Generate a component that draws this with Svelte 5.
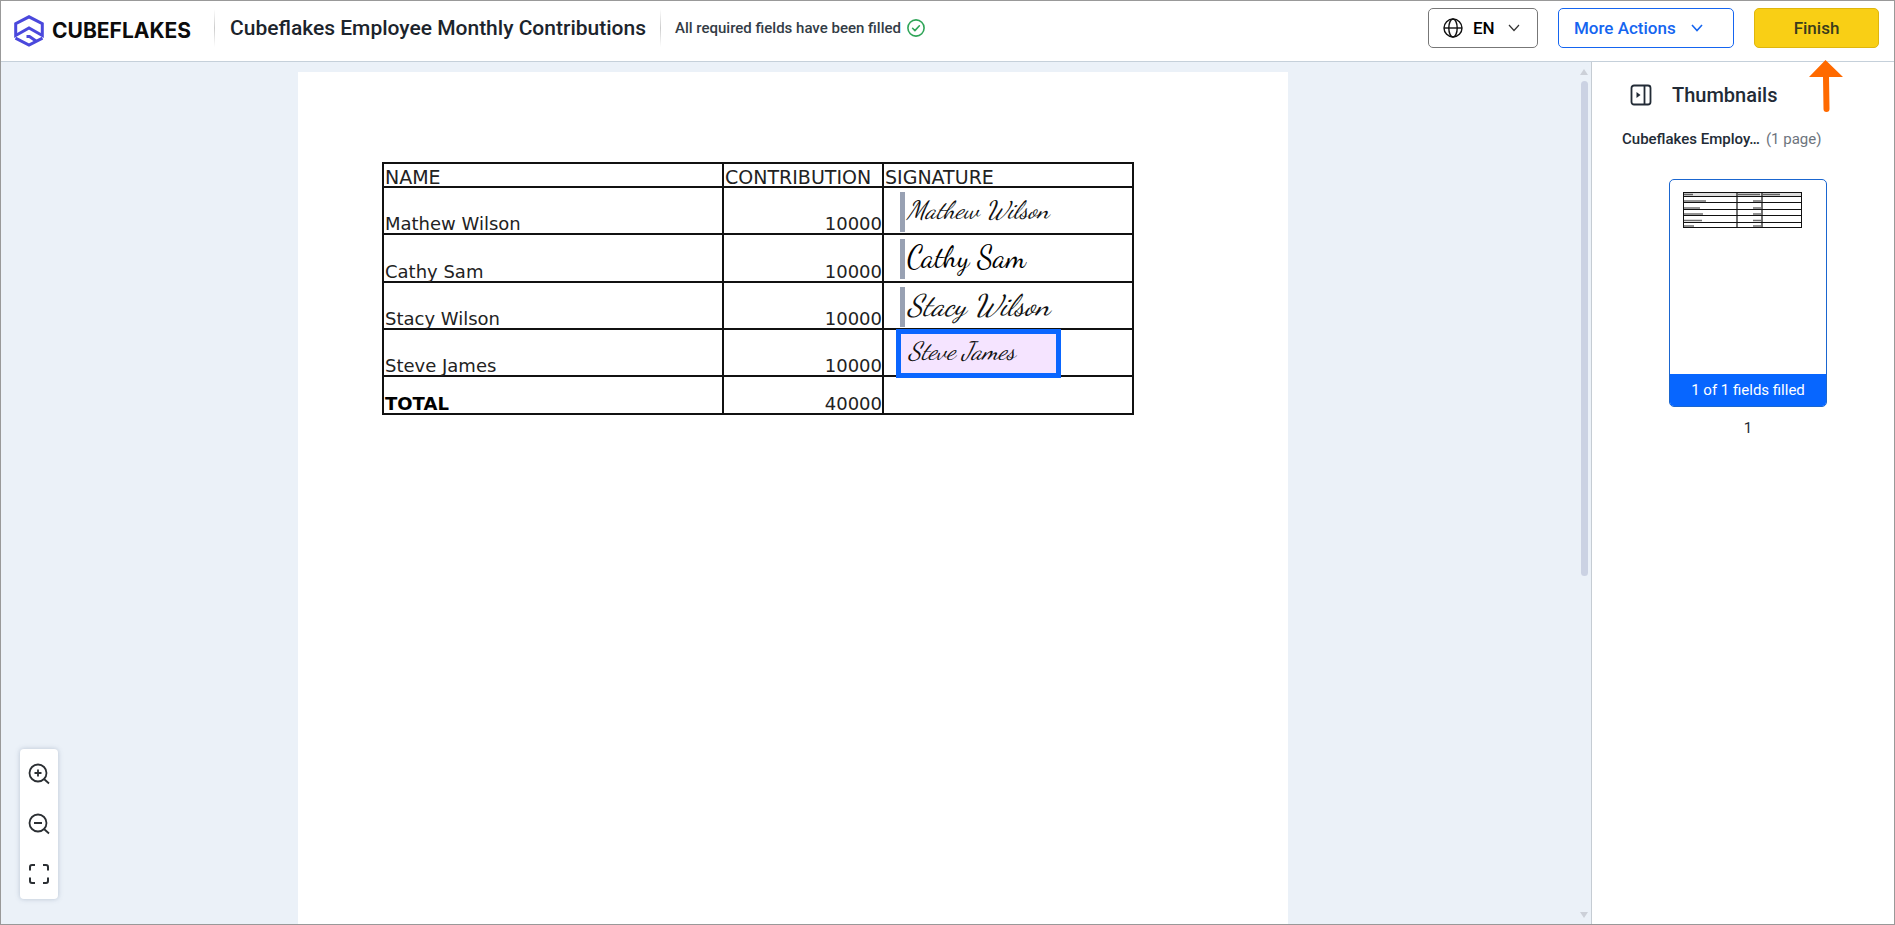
<script lang="ts">
	const docName = "Cubeflakes Employee Monthly Contributions";
	const fileLabel = "Cubeflakes Employ…";

	let rows = [
		{ name: "Mathew Wilson", amount: 10000, style: "thin" },
		{ name: "Cathy Sam", amount: 10000, style: "bold" },
		{ name: "Stacy Wilson", amount: 10000, style: "wide" },
		{ name: "Steve James", amount: 10000, style: "thin" }
	];
	let active = $state(3);
	let total = rows.reduce((sum, r) => sum + r.amount, 0);
</script>

<div class="app">
	<header class="topbar">
		<div class="brand">
			<svg width="30" height="32" viewBox="0 0 30 32" fill="none" stroke="#4a48dc" stroke-width="3">
				<path d="M1.700 20.500V8.600L15 1.800l13.300 6.800V20.500L15 13 1.700 20.500z" />
				<path d="M1.500 23.200L15 30l13.500-6.800" />
				<path d="M12.500 21.500h3l6.500 4.500" />
			</svg>
			<span class="brand-name">CUBEFLAKES</span>
		</div>
		<span class="divider"></span>
		<h1>{docName}</h1>
		<span class="divider"></span>
		<p class="status">
			All required fields have been filled
			<svg width="18" height="18" viewBox="0 0 18 18" fill="none" stroke="#2fa558" stroke-width="1.600" stroke-linecap="round" stroke-linejoin="round">
				<circle cx="9" cy="9" r="8.100" />
				<path d="M5.600 9.300l2.300 2.300 4.500-4.800" />
			</svg>
		</p>

		<div class="actions">
			<button class="btn lang">
				<svg width="20" height="20" viewBox="0 0 20 20" fill="none" stroke="#111" stroke-width="1.400">
					<circle cx="10" cy="10" r="9" />
					<ellipse cx="10" cy="10" rx="4.200" ry="9" />
					<path d="M1 10h18" />
				</svg>
				EN
				<svg class="chev" width="12" height="8" viewBox="0 0 12 8" fill="none" stroke="#333" stroke-width="1.200"><path d="M1 1l5 5.500L11 1" /></svg>
			</button>
			<button class="btn more">
				More Actions
				<svg width="12" height="8" viewBox="0 0 12 8" fill="none" stroke="#1565f0" stroke-width="1.600"><path d="M1 1l5 5.500L11 1" /></svg>
			</button>
			<div class="finish-wrap">
				<button class="btn finish">Finish</button>
				<svg class="pointer" width="34" height="52" viewBox="0 0 34 52">
					<path d="M16.500 0L34 17H20l.5 32a3 3 0 0 1-6 0L14 17H0z" fill="#ff6a00" />
				</svg>
			</div>
		</div>
	</header>

	<div class="body">
		<main class="viewer">
			<div class="stage">
				<div class="page">
					<table>
						<thead>
							<tr>
								<th class="c-name">NAME</th>
								<th class="c-amount">CONTRIBUTION</th>
								<th>SIGNATURE</th>
							</tr>
						</thead>
						<tbody>
							{#each rows as row, i}
								<tr>
									<td>{row.name}</td>
									<td class="num">{row.amount}</td>
									<td class="sign-cell">
										<button class="sign {row.style}" class:active={active === i} onclick={() => (active = i)}>
											{row.name}
										</button>
									</td>
								</tr>
							{/each}
							<tr class="total">
								<td><b>TOTAL</b></td>
								<td class="num">{total}</td>
								<td></td>
							</tr>
						</tbody>
					</table>
				</div>
			</div>

			<div class="scroll">
				<svg width="8" height="6" viewBox="0 0 8 6"><path d="M4 0l4 6H0z" fill="#ccd0d8" /></svg>
				<div class="track"><div class="thumb"></div></div>
				<svg width="8" height="6" viewBox="0 0 8 6"><path d="M0 0h8L4 6z" fill="#ccd0d8" /></svg>
			</div>

			<div class="zoom">
				<button aria-label="Zoom in">
					<svg width="22" height="22" viewBox="0 0 22 22" fill="none" stroke="#2b2f33" stroke-width="1.800">
						<circle cx="10" cy="10" r="8.500" />
						<path d="M16 16l5 4.500M6.500 10h7M10 6.500v7" />
					</svg>
				</button>
				<button aria-label="Zoom out">
					<svg width="22" height="22" viewBox="0 0 22 22" fill="none" stroke="#2b2f33" stroke-width="1.800">
						<circle cx="10" cy="10" r="8.500" />
						<path d="M16 16l5 4.500M6 10h8" />
					</svg>
				</button>
				<button aria-label="Fit to screen">
					<svg width="22" height="22" viewBox="0 0 22 22" fill="none" stroke="#2b2f33" stroke-width="2">
						<path d="M2 7.500V4a2 2 0 0 1 2-2h3M15 2h3a2 2 0 0 1 2 2v3.500M20 14.500V18a2 2 0 0 1-2 2h-3M7 20H4a2 2 0 0 1-2-2v-3.500" />
					</svg>
				</button>
			</div>
		</main>

		<aside>
			<div class="side-head">
				<button aria-label="Collapse thumbnails">
					<svg width="22" height="22" viewBox="0 0 22 22" fill="none" stroke="#222b36" stroke-width="1.800">
						<rect x="1.500" y="1.500" width="19" height="19" rx="2.500" />
						<path d="M14.500 1.500v19" />
						<path d="M6.500 8v6l4-3z" fill="#222b36" stroke="none" />
					</svg>
				</button>
				<h2>Thumbnails</h2>
			</div>
			<p class="file"><b>{fileLabel}</b><span>(1 page)</span></p>

			<button class="card">
				<span class="preview">
					<svg width="119" height="36" viewBox="0 0 119 36" fill="none" stroke="#111">
						<rect x="1" y="1" width="117" height="3" fill="#ddd" stroke="none" />
						<rect x="0.500" y="0.500" width="118" height="35" />
						<path d="M0 4.500h119M0 10.500h119M0 17.500h119M0 23.500h119M0 30.500h119M54 0v36M79 0v36" stroke-width="1.200" />
						<path d="M1 2.500h9M55 2.500h22M80 2.500h17M1 9h22M1 16h16M1 22h19M1 28.500h18M1 34h10M70 9h8M70 16h8M70 22h8M70 28.500h8M70 34h8" stroke-width="1.500" opacity="0.600" />
					</svg>
				</span>
				<span class="filled">1 of 1 fields filled</span>
			</button>
			<p class="page-no">1</p>
		</aside>
	</div>
</div>

<style>
	:global(body) {
		overflow: hidden;
	}

	.app {
		box-sizing: border-box;
		height: 100vh;
		display: flex;
		flex-direction: column;
		border: 1px solid #999;
		background: #fff;
		color: #222b36;
		font-family: Roboto, "Liberation Sans", sans-serif;
	}

	h1, h2, p {
		margin: 0;
	}

	button {
		padding: 0;
		border: none;
		background: none;
		font-family: inherit;
		color: inherit;
		cursor: pointer;
	}

	svg {
		display: block;
		flex: none;
	}

	.topbar {
		box-sizing: border-box;
		height: 61px;
		flex: none;
		display: flex;
		align-items: center;
		padding: 0 15px 6px 13px;
		border-bottom: 1px solid #c5d0da;
	}

	.brand {
		display: flex;
		align-items: center;
		gap: 8px;
		padding-top: 6px;
		width: 200px;
	}

	.brand-name {
		font: 700 21px/24px Inter, sans-serif;
		color: #0c0c0c;
	}

	.divider {
		width: 1px;
		height: 38px;
		background: linear-gradient(#fff, #ccc, #fff);
	}

	h1 {
		margin: 0 14px 0 15px;
		font-size: 21px;
		line-height: 28px;
		font-weight: 500;
		color: #1c242c;
	}

	.status {
		display: flex;
		align-items: center;
		gap: 6px;
		margin-left: 14px;
		font-size: 15px;
		line-height: 20px;
		font-weight: 500;
		color: #333c46;
	}

	.actions {
		display: flex;
		gap: 20px;
		margin-left: auto;
	}

	.btn {
		box-sizing: border-box;
		height: 40px;
		display: flex;
		align-items: center;
		border-radius: 5px;
		font-size: 17px;
		font-weight: 500;
	}

	.lang {
		width: 110px;
		gap: 10px;
		padding: 0 17px 0 14px;
		border: 1px solid #777;
		color: #000;
	}

	.chev {
		margin-left: auto;
	}

	.more {
		width: 176px;
		gap: 15px;
		padding: 0 15px;
		border: 1px solid #1565f0;
		color: #1565f0;
	}

	.finish-wrap {
		position: relative;
	}

	.finish {
		width: 125px;
		justify-content: center;
		background: #f9cf15;
		border: 1px solid #dfb60d;
		color: #3a3c1c;
	}

	.pointer {
		position: absolute;
		z-index: 2;
		top: 52px;
		right: 36px;
	}

	.body {
		flex: 1;
		min-height: 0;
		display: flex;
	}

	.viewer {
		position: relative;
		flex: 1;
		min-width: 0;
		display: flex;
		background: #ebf1f8;
	}

	.stage {
		flex: 1;
		display: flex;
		justify-content: center;
		padding: 10px 0 0 6px;
		overflow: hidden;
	}

	.page {
		box-sizing: border-box;
		width: 990px;
		padding: 90px 84px 0;
		background: #fff;
	}

	table {
		width: 752px;
		height: 253px;
		table-layout: fixed;
		border-collapse: collapse;
		font: 18px/18px "DejaVu Sans", Verdana, sans-serif;
		color: #222;
	}

	th, td {
		padding: 0 1px;
		border: 2px solid #111;
		text-align: left;
		vertical-align: bottom;
		font-weight: 400;
	}

	th {
		font-size: 19px;
	}

	thead tr {
		height: 24px;
	}

	.total {
		height: 38px;
	}

	.c-name {
		width: 336px;
	}

	.c-amount {
		width: 156px;
	}

	.num {
		padding: 0;
		text-align: right;
	}

	b {
		color: #000;
	}

	.sign-cell {
		position: relative;
	}

	/* fields float over the printed document */
	.sign {
		position: absolute;
		top: 4px;
		left: 16px;
		box-sizing: border-box;
		height: 40px;
		border-left: 5px solid #98a1b3;
		padding: 0 0 4px 2px;
		font: italic 25px/30px "Dancing Script", "Liberation Serif", cursive;
		color: #111;
		white-space: nowrap;
	}

	.sign.bold {
		font-size: 30px;
		font-style: normal;
		color: #000;
	}

	.sign.wide {
		font-size: 30px;
	}

	.sign.active {
		top: -1px;
		left: 12px;
		width: 165px;
		height: 49px;
		border: 5px solid #0a66ff;
		padding: 0 0 5px 7px;
		background: #f5e4ff;
		text-align: left;
	}

	.scroll {
		width: 12px;
		display: flex;
		flex-direction: column;
		align-items: center;
		gap: 6px;
		padding: 7px 2px 6px 0;
		box-sizing: border-box;
	}

	.track {
		flex: 1;
	}

	.thumb {
		width: 7px;
		height: 60%;
		border-radius: 4px;
		background: #cbd2e3;
	}

	.zoom {
		position: absolute;
		left: 19px;
		bottom: 25px;
		display: flex;
		flex-direction: column;
		padding: 0 8px;
		border-radius: 4px;
		background: #fff;
		box-shadow: 0 0 5px rgba(90, 110, 140, 0.35);
	}

	.zoom button {
		height: 50px;
	}

	aside {
		box-sizing: border-box;
		width: 303px;
		border-left: 1px solid #c5ccd3;
		padding: 19px 30px 0 30px;
	}

	.side-head {
		display: flex;
		align-items: center;
		gap: 20px;
		padding-left: 8px;
	}

	h2 {
		font-size: 20px;
		line-height: 28px;
		font-weight: 500;
	}

	.file {
		display: flex;
		gap: 6px;
		margin-top: 20px;
		font-size: 15px;
		line-height: 20px;
		color: #6d747d;
	}

	.file b {
		font-weight: 500;
		color: #222b36;
	}

	.card {
		box-sizing: border-box;
		width: 158px;
		height: 228px;
		display: flex;
		flex-direction: column;
		margin: 30px 0 0 47px;
		border: 1px solid #1a66d0;
		border-radius: 5px;
		overflow: hidden;
	}

	.preview {
		flex: 1;
		padding: 12px 13px;
	}

	.filled {
		align-self: stretch;
		background: #0766ff;
		color: #fff;
		font-size: 15px;
		line-height: 32px;
	}

	.page-no {
		width: 158px;
		margin: 11px 0 0 47px;
		text-align: center;
		font-size: 15px;
		line-height: 20px;
	}
</style>
